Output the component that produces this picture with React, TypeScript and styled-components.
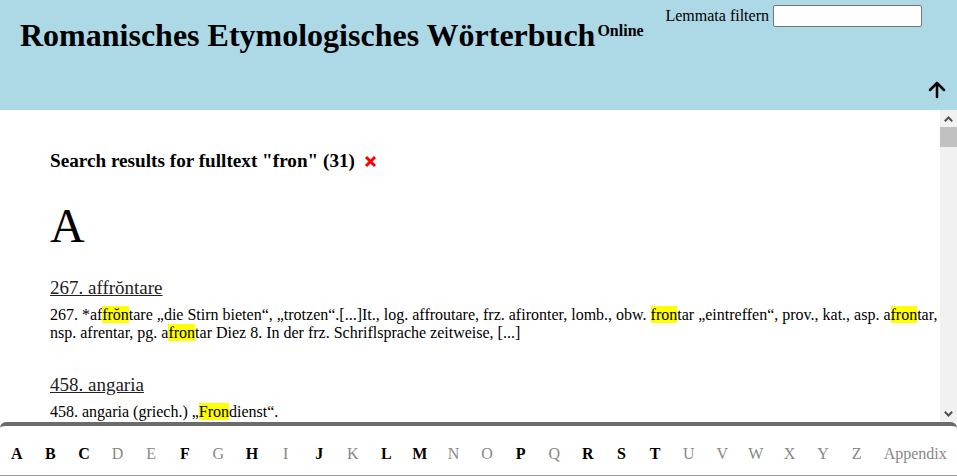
import { Fragment } from "react";
import styled, { createGlobalStyle } from "styled-components";
import { ArrowUp } from "lucide-react";

const GlobalStyle = createGlobalStyle`
  html, body {
    margin: 0;
    height: 100%;
  }
  body {
    font-family: "Liberation Serif", "Times New Roman", serif;
    font-size: 16px;
    color: #000;
    background: #fff;
  }
  #root {
    height: 100%;
  }
`;

const Page = styled.div`
  display: flex;
  flex-direction: column;
  height: 100vh;
  overflow: hidden;
`;

const Header = styled.header`
  display: flex;
  flex-shrink: 0;
  height: 110px;
  background: #add8e6;
`;

const Title = styled.h1`
  margin: 0;
  padding: 17px 0 0 20px;
  font-size: 32px;
  font-weight: bold;
  line-height: 37px;
  white-space: nowrap;

  sup {
    font-size: 16px;
    vertical-align: 10px;
    line-height: 0;
    margin-left: 2px;
  }
`;

const Spacer = styled.div`
  flex: 1;
`;

const Filter = styled.label`
  display: flex;
  align-items: center;
  gap: 4px;
  align-self: flex-start;
  margin-top: 5px;
  font-size: 16px;
`;

const FilterInput = styled.input`
  box-sizing: border-box;
  width: 149px;
  height: 22px;
  border: 1px solid #767676;
  border-radius: 2px;
  background: #fff;
  padding: 1px 2px;
  font-size: 13px;
`;

const TopButton = styled.button`
  align-self: flex-end;
  display: flex;
  margin: 0 8px 8px 3px;
  padding: 0;
  border: 0;
  background: none;
  color: #000;
  cursor: pointer;
`;

const Body = styled.div`
  display: flex;
  flex: 1;
  min-height: 0;
`;

const Results = styled.main`
  flex: 1;
  overflow-y: auto;
  scrollbar-width: none;
  padding: 40px 0 0 50px;

  &::-webkit-scrollbar {
    display: none;
  }
`;

const ScrollBar = styled.div`
  display: flex;
  flex-direction: column;
  width: 17px;
  flex-shrink: 0;
  background: #f1f1f1;
`;

const ScrollButton = styled.button`
  display: flex;
  align-items: center;
  justify-content: center;
  height: 17px;
  padding: 0;
  border: 0;
  background: #f1f1f1;
  color: #505050;
`;

const ScrollThumb = styled.div`
  height: 20px;
  background: #c1c1c1;
`;

const SearchTitle = styled.h3`
  display: flex;
  align-items: center;
  gap: 9px;
  margin: 0;
  font-size: 19.2px;
  font-weight: bold;
`;

const ClearButton = styled.button`
  display: flex;
  padding: 0;
  border: 0;
  background: none;
  cursor: pointer;
`;

const LetterHeading = styled.h2`
  margin: 26px 0 24px;
  font-size: 48px;
  font-weight: normal;
  line-height: 55px;
`;

const Entry = styled.section`
  margin-bottom: 32px;
`;

const EntryLink = styled.a`
  display: inline-block;
  margin-bottom: 7px;
  font-size: 19px;
  color: #222;
  text-decoration: underline;
`;

const EntryText = styled.p`
  margin: 0;
  line-height: 18px;
`;

const Hit = styled.mark`
  background: #ffff00;
  color: inherit;
`;

const Footer = styled.nav`
  display: flex;
  flex-shrink: 0;
  align-items: center;
  height: 43px;
  padding-top: 6px;
  border-top: 4px solid #6b6b6b;
  border-bottom: 1px solid #9a9a9a;
  border-radius: 6px 6px 0 0;
`;

const NavLetter = styled.a<{ $active: boolean }>`
  width: 33.6px;
  text-align: center;
  font-size: 16px;
  font-weight: ${({ $active }) => ($active ? "bold" : "normal")};
  color: ${({ $active }) => ($active ? "#000" : "#888")};
  text-decoration: none;
  cursor: ${({ $active }) => ($active ? "pointer" : "default")};
`;

const Appendix = styled.a`
  flex: 1;
  text-align: center;
  font-size: 16px;
  color: #888;
  text-decoration: none;
`;

const mark = (text: string) =>
  text.split(/(\{[^}]*\})/).map((part, i) =>
    part.startsWith("{") ? <Hit key={i}>{part.slice(1, -1)}</Hit> : <Fragment key={i}>{part}</Fragment>
  );

type Result = { lemma: string; text: string };

const sections: { letter: string; entries: Result[] }[] = [
  {
    letter: "A",
    entries: [
      {
        lemma: "267. affrŏntare",
        text:
          "267. *af{frŏn}tare „die Stirn bieten“, „trotzen“.[...]It., log. affroutare, frz. afironter, lomb., obw. {fron}tar „eintreffen“, prov., kat., asp. a{fron}tar, nsp. afrentar, pg. a{fron}tar Diez 8. In der frz. Schriflsprache zeitweise, [...]",
      },
      { lemma: "458. angaria", text: "458. angaria (griech.) „{Fron}dienst“." },
    ],
  },
  {
    letter: "B",
    entries: [
      { lemma: "1102. bĭfrons", text: "1102. bĭ{fron}s „mit zwei Stirnen“.[...]It. bifronte „doppelzüngig“, afrz. bifront, prov. bi{fron}t „falsch“, „heuchlerisch“, [...] Diez 56. In der frz. Schriftsprache nur gelehrt, [...]" },
      { lemma: "1254. bŏrda", text: "1254. *bŏrda „Brett“.[...]Afrz. borde „Hütte“, „Bretterbude“, prov. borda, kat. borda, sp. borda „Hütte“, in der {Fron}zeit „Bauernhaus“, pg. borda, [...]" },
    ],
  },
  {
    letter: "C",
    entries: [
      { lemma: "2143. cŏnfrŏntare", text: "2143. *cŏn{frŏn}tare „gegenüberstellen“.[...]It. confrontare, frz. confronter, prov. con{fron}tar, kat. con{fron}tar „angrenzen“, sp. confrontar, pg. con{fron}tar, [...]" },
      { lemma: "2390. corrogata", text: "2390. corrogata „{Fron}arbeit“.[...]Frz. corvée, prov. corroada, kat. corrovada, [...] Diez 561. Die Bedeutung „{Fron}dienst“ ist gemeinrom., [...]" },
      { lemma: "2391. corrogare", text: "2391. corrogare „zusammenbitten“.[...]Afrz. corroer „zur {Fron} aufbieten“, prov. corroar, [...]" },
    ],
  },
  {
    letter: "F",
    entries: [
      { lemma: "3525. frŏns, -dis", text: "3525. {frŏn}s, -dis „Laub“.[...]It. fronda, frz. fronde „Schleuder“, prov. {fron}da, kat. {fron}da, sp. fronda, pg. {fron}da, [...] Diez 147." },
      { lemma: "3526. frŏns, -tis", text: "3526. {frŏn}s, -tis „Stirn“.[...]It. fronte, log. fronte, frz. front, prov. {fron}t, kat. {fron}t, sp. frente, pg. {fron}te, [...] Ableitungen s. 3527–3535." },
      { lemma: "3527. frŏntale", text: "3527. {frŏn}tale „Stirnband“.[...]It. frontale, frz. fronteau, prov. {fron}tal, kat. {fron}tal, sp. frontal „Altarvorsatz“, pg. {fron}tal, [...]" },
      { lemma: "3528. frŏntaria", text: "3528. *{frŏn}taria „Grenze“.[...]It. frontiera, frz. frontière, prov. {fron}teira, kat. {fron}tera, sp. frontera, pg. {fron}teira, [...]" },
      { lemma: "3529. frŏntĭcŭlus", text: "3529. *{frŏn}tĭcŭlus „kleine Stirn“.[...]Log. {fron}tigu, [...] Vgl. 3526." },
      { lemma: "3530. frŏntōsus", text: "3530. {frŏn}tōsus „frech“.[...]Afrz. frontos, prov. {fron}tos, sp. frontoso, [...]" },
      { lemma: "3531. frŏntĭnus", text: "3531. *{frŏn}tĭnus „mit einer Blesse“.[...]It. frontino, lomb. {fron}tin, [...]" },
      { lemma: "3532. frŏntĭspicium", text: "3532. {frŏn}tĭspicium „Vorderseite“.[...]It. frontispizio, frz. frontispice, sp. frontispicio, [...]" },
      { lemma: "3533. frŏntōnem", text: "3533. *{frŏn}tōnem „Giebel“.[...]It. frontone, frz. fronton, sp. frontón, [...]" },
      { lemma: "3534. frŏntĕra", text: "3534. *{frŏn}tĕra „Vorderseite“.[...]Asp. {fron}tera, [...]" },
      { lemma: "3535. frŏntĭcare", text: "3535. *{frŏn}tĭcare „stoßen“.[...]Obw. {fron}tgar, [...]" },
      { lemma: "3538. frōnda", text: "3538. *{frōn}da „Laub“.[...]Vgl. 3525, [...]" },
    ],
  },
  { letter: "H", entries: [{ lemma: "4120. hŏmagium", text: "4120. *hŏmagium „Lehnseid“.[...]Frz. hommage, prov. omenatge, [...] „{Fron}pflicht“, [...]" }] },
  { letter: "J", entries: [{ lemma: "4610. jŏrnale", text: "4610. *jŏrnale „Tagewerk“.[...]Frz. journal, prov. jornal „{Fron}tag“, [...]" }] },
  { letter: "L", entries: [{ lemma: "4966. lăbor", text: "4966. lăbor „Arbeit“.[...]Sp. labor „Feldarbeit“, „{Fron}arbeit“, [...]" }] },
  { letter: "M", entries: [{ lemma: "5300. mănŭŏpĕra", text: "5300. mănŭŏpĕra „Handarbeit“.[...]Frz. manœuvre, prov. manobra „{Fron}dienst“, [...]" }] },
  {
    letter: "P",
    entries: [
      { lemma: "6480. prŏfrŏntare", text: "6480. *prŏ{frŏn}tare „vorstrecken“.[...]Prov. pro{fron}tar, [...]" },
      { lemma: "6520. pŏdĭum", text: "6520. pŏdĭum „Erhöhung“.[...]Frz. puy, [...] „{Fron}hof“, [...]" },
    ],
  },
  {
    letter: "R",
    entries: [
      { lemma: "7190. rĕfrŏntare", text: "7190. *rĕ{frŏn}tare „wieder begegnen“.[...]Afrz. refronter, prov. re{fron}tar, [...]" },
      { lemma: "7212. rĕgalis", text: "7212. rĕgalis „königlich“.[...]Afrz. reial „{Fron}gut“, [...]" },
    ],
  },
  {
    letter: "S",
    entries: [
      { lemma: "7990. sŭbfrŏntare", text: "7990. *sŭb{frŏn}tare „unterstützen“.[...]Afrz. sofronter, [...]" },
      { lemma: "8108. sĕrvĭtĭum", text: "8108. sĕrvĭtĭum „Dienst“.[...]It. servizio, frz. service „{Fron}dienst“, [...]" },
    ],
  },
  {
    letter: "T",
    entries: [
      { lemma: "8720. trānsfrŏntare", text: "8720. *trāns{frŏn}tare „hinübertreten“.[...]Afrz. trefronter, [...]" },
      { lemma: "8851. tallia", text: "8851. tallia „Abgabe“.[...]Frz. taille „{Fron}steuer“, [...]" },
    ],
  },
];

const letters = "ABCDEFGHIJKLMNOPQRSTUVWXYZ".split("");
const active = new Set(sections.map((s) => s.letter));

const Chevron = ({ up }: { up?: boolean }) => (
  <svg width="9" height="6" viewBox="0 0 9 6">
    <path
      d={up ? "M0.8 5.2 L4.5 1.5 L8.2 5.2" : "M0.8 0.8 L4.5 4.5 L8.2 0.8"}
      fill="none"
      stroke="currentColor"
      strokeWidth="2"
    />
  </svg>
);

const App = () => (
  <Page>
    <GlobalStyle />
    <Header>
      <Title>
        Romanisches Etymologisches Wörterbuch<sup>Online</sup>
      </Title>
      <Spacer />
      <Filter>
        Lemmata filtern
        <FilterInput type="text" />
      </Filter>
      <TopButton aria-label="nach oben">
        <ArrowUp size={24} strokeWidth={2.5} />
      </TopButton>
    </Header>
    <Body>
      <Results>
        <SearchTitle>
          Search results for fulltext "fron" (31)
          <ClearButton aria-label="zurücksetzen">
            <svg width="13" height="13" viewBox="0 0 13 13">
              <path d="M2 2 L11 11 M11 2 L2 11" stroke="#ff0000" strokeWidth="3" />
            </svg>
          </ClearButton>
        </SearchTitle>
        {sections.map((s) => (
          <Fragment key={s.letter}>
            <LetterHeading>{s.letter}</LetterHeading>
            {s.entries.map((e) => (
              <Entry key={e.lemma}>
                <EntryLink href="#">{e.lemma}</EntryLink>
                <EntryText>{mark(e.text)}</EntryText>
              </Entry>
            ))}
          </Fragment>
        ))}
      </Results>
      <ScrollBar aria-hidden="true">
        <ScrollButton tabIndex={-1}>
          <Chevron up />
        </ScrollButton>
        <ScrollThumb />
        <Spacer />
        <ScrollButton tabIndex={-1}>
          <Chevron />
        </ScrollButton>
      </ScrollBar>
    </Body>
    <Footer>
      {letters.map((l) => (
        <NavLetter key={l} href="#" $active={active.has(l)}>
          {l}
        </NavLetter>
      ))}
      <Appendix href="#">Appendix</Appendix>
    </Footer>
  </Page>
);

export default App;
